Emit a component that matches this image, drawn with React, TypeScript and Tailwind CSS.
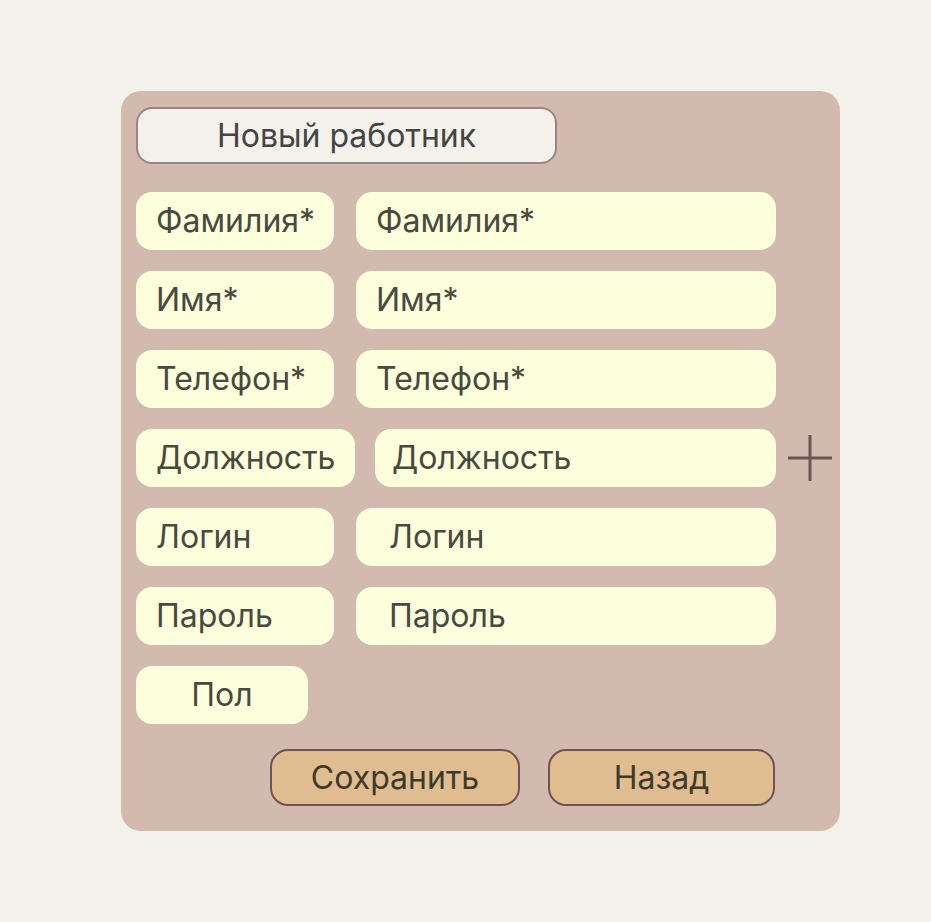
import React from "react";

const font = { fontFamily: 'Inter, "Liberation Sans", Arial, sans-serif' };

function Row({ label, labelW, inputW, inputPl, labelCenter, gap, placeholder }: { label: string; labelW: string; inputW?: string; inputPl?: string; labelCenter?: boolean; gap?: string; placeholder?: string }) {
  return (
    <div className={`flex items-center ${gap ?? "gap-[22px]"}`}>
      <div className={`${labelW} h-[58px] rounded-[16px] bg-[#fcfedc] flex items-center ${labelCenter ? "justify-center" : "pl-[20px]"} text-[32px] text-[#474a3f]`}>
        {label}
      </div>
      {placeholder !== undefined && (
        <div className={`${inputW} h-[58px] rounded-[16px] bg-[#fcfedc] flex items-center ${inputPl} text-[32px] text-[#474a3f]`}>
          {placeholder}
        </div>
      )}
    </div>
  );
}

export default function App() {
  return (
    <div className="min-h-screen w-full bg-[#f4f1ea] pt-[91px] pl-[121px]" style={font}>
      <div className="w-[719px] h-[740px] rounded-[20px] bg-[#d2bbae] pt-[16px] pl-[15px] flex flex-col">
        <div className="w-[421px] h-[57px] rounded-[16px] border-2 border-[#9d8383] bg-[#f4f1ea] flex items-center justify-center text-[32px] text-[#444444]">
          Новый работник
        </div>
        <div className="mt-[28px] flex flex-col gap-[21px]">
          <Row label="Фамилия*" labelW="w-[198px]" inputW="w-[420px]" inputPl="pl-[20px]" placeholder="Фамилия*" />
          <Row label="Имя*" labelW="w-[198px]" inputW="w-[420px]" inputPl="pl-[20px]" placeholder="Имя*" />
          <Row label="Телефон*" labelW="w-[198px]" inputW="w-[420px]" inputPl="pl-[20px]" placeholder="Телефон*" />
          <div className="flex items-center">
            <Row label="Должность" labelW="w-[219px]" inputW="w-[401px]" inputPl="pl-[17px]" gap="gap-[20px]" placeholder="Должность" />
            <svg className="ml-[12px]" width="44" height="46" viewBox="0 0 44 46">
              <line x1="22" y1="0" x2="22" y2="46" stroke="#6f5353" strokeWidth="3" />
              <line x1="0" y1="23" x2="44" y2="23" stroke="#6f5353" strokeWidth="3" />
            </svg>
          </div>
          <Row label="Логин" labelW="w-[198px]" inputW="w-[420px]" inputPl="pl-[33px]" placeholder="Логин" />
          <Row label="Пароль" labelW="w-[198px]" inputW="w-[420px]" inputPl="pl-[33px]" placeholder="Пароль" />
          <Row label="Пол" labelW="w-[172px]" labelCenter />
        </div>
        <div className="mt-[25px] flex gap-[28px] pl-[134px]">
          <button className="w-[250px] h-[57px] rounded-[18px] border-2 border-[#6f5353] bg-[#e0bd90] text-[32px] text-[#3d3a2a] flex items-center justify-center">
            Сохранить
          </button>
          <button className="w-[227px] h-[57px] rounded-[18px] border-2 border-[#6f5353] bg-[#e0bd90] text-[32px] text-[#3d3a2a] flex items-center justify-center">
            Назад
          </button>
        </div>
      </div>
    </div>
  );
}
